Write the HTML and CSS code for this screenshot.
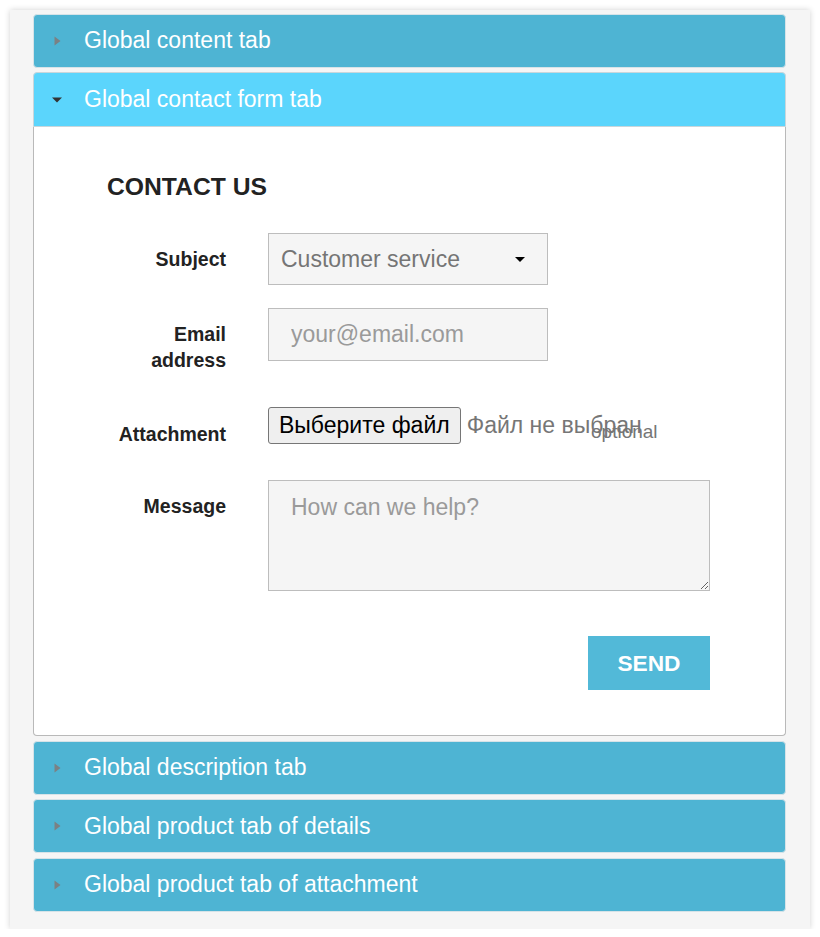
FILE: index.html
```html
<!DOCTYPE html>
<html>
<head>
<meta charset="utf-8">
<link rel="stylesheet" href="styles.css">
</head>
<body>
<div class="wrap">
  <div class="tab">
    <div class="tab-head"><svg class="arrow" width="12" height="10" viewBox="0 0 12 10"><path d="M3.5 0.5 L9.5 5 L3.5 9.5 Z" fill="#7b8184"/></svg><span class="tab-title">Global content tab</span></div>
  </div>
  <div class="tab open">
    <div class="tab-head"><svg class="arrow" width="12" height="10" viewBox="0 0 12 10"><path d="M1 2.5 L11 2.5 L6 7.5 Z" fill="#333333"/></svg><span class="tab-title">Global contact form tab</span></div>
    <div class="tab-body">
      <h3 class="heading">CONTACT US</h3>
      <div class="form">
        <div class="row row-subject">
          <div class="label">Subject</div>
          <div class="select"><span class="select-text">Customer service</span><span class="select-caret"></span></div>
        </div>
        <div class="row row-email">
          <div class="label">Email address</div>
          <input class="field" type="text" placeholder="your@email.com">
        </div>
        <div class="row row-file">
          <div class="label">Attachment</div>
          <div class="file">
            <span class="file-btn">Выберите файл</span><span class="file-name">Файл не выбран</span>
            <span class="optional">optional</span>
          </div>
        </div>
        <div class="row row-msg">
          <div class="label">Message</div>
          <textarea class="area" placeholder="How can we help?"></textarea>
        </div>
        <div class="actions">
          <span class="send">SEND</span>
        </div>
      </div>
    </div>
  </div>
  <div class="tab">
    <div class="tab-head"><svg class="arrow" width="12" height="10" viewBox="0 0 12 10"><path d="M3.5 0.5 L9.5 5 L3.5 9.5 Z" fill="#7b8184"/></svg><span class="tab-title">Global description tab</span></div>
  </div>
  <div class="tab">
    <div class="tab-head"><svg class="arrow" width="12" height="10" viewBox="0 0 12 10"><path d="M3.5 0.5 L9.5 5 L3.5 9.5 Z" fill="#7b8184"/></svg><span class="tab-title">Global product tab of details</span></div>
  </div>
  <div class="tab">
    <div class="tab-head"><svg class="arrow" width="12" height="10" viewBox="0 0 12 10"><path d="M3.5 0.5 L9.5 5 L3.5 9.5 Z" fill="#7b8184"/></svg><span class="tab-title">Global product tab of attachment</span></div>
  </div>
</div>
</body>
</html>
```
FILE: styles.css
```css
html, body {
  margin: 0;
  padding: 0;
  background: #ffffff;
  font-family: "Liberation Sans", Arial, sans-serif;
}
.wrap {
  margin: 10px 10px 0 10px;
  width: 800px;
  box-sizing: border-box;
  padding: 3.5px 24px 17.5px 23px;
  background: #f5f5f5;
  box-shadow: 0 0 6px rgba(0,0,0,0.18);
  display: flex;
  flex-direction: column;
  gap: 4.5px;
}
.tab {
  border-radius: 4px;
}
.tab-head {
  height: 54px;
  box-sizing: border-box;
  background: #4eb4d3;
  border: 1px solid #d6e3e8;
  border-radius: 4px;
  display: flex;
  align-items: center;
  padding-left: 17px;
}
.tab.open .tab-head {
  background: #5bd5fc;
  border-color: #c9d6db;
  border-radius: 4px 4px 0 0;
  height: 55px;
}
.arrow {
  display: block;
  flex: none;
}
.tab-title {
  margin-left: 21px;
  color: #ffffff;
  font-size: 23px;
}
.tab-body {
  background: #ffffff;
  border: 1px solid #b9b9b9;
  border-top: none;
  border-radius: 0 0 4px 4px;
  padding: 44px 75px 45px 73px;
}
.heading {
  margin: 0 0 30px 0;
  font-size: 24.7px;
  line-height: 32px;
  font-weight: bold;
  color: #222222;
}
.form {
  display: flex;
  flex-direction: column;
}
.row {
  display: grid;
  grid-template-columns: 119px 1fr;
  column-gap: 42px;
  align-items: start;
}
.label {
  text-align: right;
  font-weight: bold;
  font-size: 19.5px;
  line-height: 26px;
  color: #222222;
  padding-top: 13px;
}
.row-subject { margin-bottom: 23px; }
.row-email { margin-bottom: 34px; }
.row-file { margin-bottom: 33px; }
.row-file .label { padding-top: 14px; }
.select {
  width: 280px;
  height: 52px;
  box-sizing: border-box;
  background: #f5f5f5;
  border: 1px solid #bdbdbd;
  display: flex;
  align-items: center;
  justify-content: space-between;
  padding: 0 22px 0 12px;
}
.select-text {
  font-size: 23px;
  color: #757575;
}
.select-caret {
  width: 0;
  height: 0;
  border-top: 5px solid #000000;
  border-left: 5px solid transparent;
  border-right: 5px solid transparent;
}
.field {
  width: 280px;
  height: 53px;
  box-sizing: border-box;
  background: #f5f5f5;
  border: 1px solid #bdbdbd;
  padding: 0 22px;
  font-family: "Liberation Sans", Arial, sans-serif;
  font-size: 23px;
  color: #555555;
  outline: none;
  margin: 0;
}
.field::placeholder, .area::placeholder {
  color: #9a9a9a;
}
.file {
  position: relative;
  display: flex;
  align-items: center;
  height: 37px;
}
.file-btn {
  height: 37px;
  box-sizing: border-box;
  display: flex;
  align-items: center;
  padding: 0 10px;
  background: #efefef;
  border: 1px solid #767676;
  border-radius: 3px;
  font-size: 23px;
  color: #000000;
}
.file-name {
  margin-left: 6px;
  font-size: 23px;
  color: #767676;
}
.optional {
  position: absolute;
  left: 323px;
  top: 14px;
  font-size: 19px;
  color: #767676;
}
.area {
  width: 442px;
  height: 111px;
  box-sizing: border-box;
  background: #f5f5f5;
  border: 1px solid #bdbdbd;
  padding: 12px 22px;
  font-family: "Liberation Sans", Arial, sans-serif;
  font-size: 23px;
  line-height: 28px;
  margin: 0;
  resize: both;
  outline: none;
  display: block;
}
.actions {
  display: flex;
  justify-content: flex-end;
  margin-top: 45px;
}
.send {
  width: 122px;
  height: 54px;
  background: #52b9d8;
  color: #ffffff;
  font-weight: bold;
  font-size: 22.7px;
  display: flex;
  align-items: center;
  justify-content: center;
}
```
